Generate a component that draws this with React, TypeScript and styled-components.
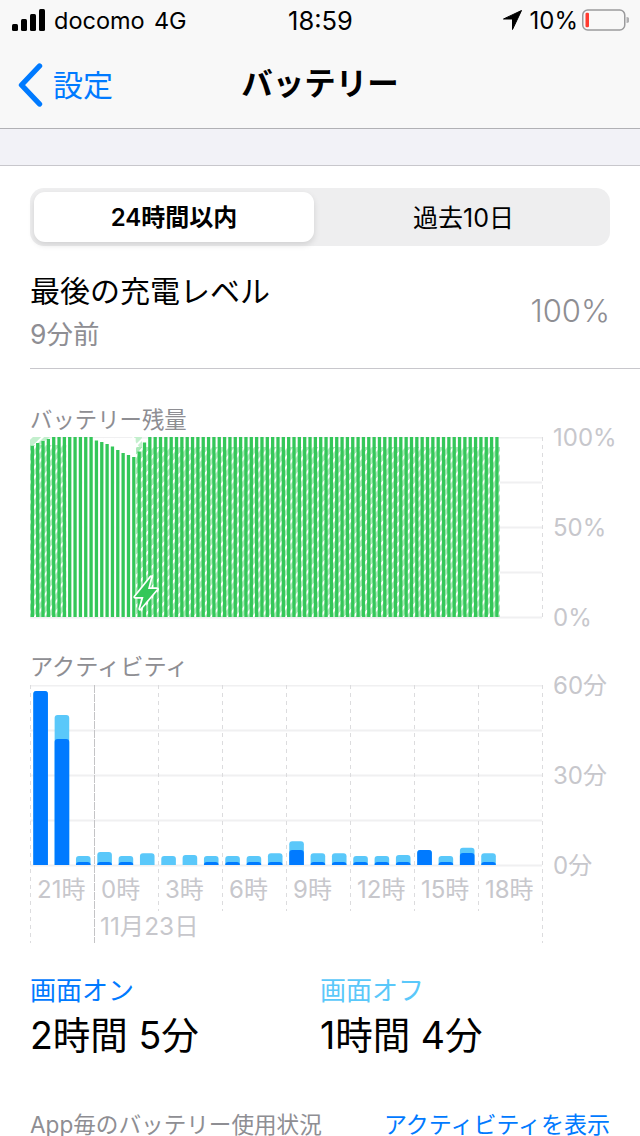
import React from "react";
import styled, { createGlobalStyle } from "styled-components";

const GlobalStyle = createGlobalStyle`
  html, body { margin: 0; padding: 0; width: 640px; height: 1136px; overflow: hidden; background: #fff; }
  body { font-family: Inter, "Noto Sans CJK JP", sans-serif; -webkit-font-smoothing: antialiased; }
`;

const Page = styled.div`
  width: 640px;
  height: 1136px;
  overflow: hidden;
  display: flex;
  flex-direction: column;
`;

const Header = styled.header`
  height: 128px;
  background: #f8f8f8;
  border-bottom: 1px solid #b1b1b5;
  display: flex;
  flex-direction: column;
  flex: none;
`;

const StatusBar = styled.div`
  height: 40px;
  padding: 0 11px 0 12px;
  display: grid;
  grid-template-columns: 1fr auto 1fr;
  align-items: center;
  font-size: 24px;
  color: #000;
`;

const StatusLeft = styled.div`
  display: flex;
  align-items: center;
  gap: 9px;
`;

const Carrier = styled.span`
  font-size: 23.5px;
  word-spacing: -2px;
`;

const Clock = styled.span`
  font-size: 25.5px;
`;

const StatusRight = styled.div`
  display: flex;
  align-items: center;
  justify-content: flex-end;
  gap: 4px;
`;

const ArrowIcon = styled.svg`
  margin-right: 4px;
`;

const NavBar = styled.div`
  flex: 1;
  position: relative;
  display: flex;
  align-items: center;
  justify-content: center;
`;

const BackButton = styled.div`
  position: absolute;
  left: 18px;
  top: 23px;
  display: flex;
  align-items: center;
  gap: 10px;
  color: #007aff;
  font-size: 30px;
  line-height: 44px;
`;

const Title = styled.h1`
  margin: 0;
  font-size: 31.5px;
  font-weight: 700;
  color: #000;
  line-height: 44px;
`;

const Band = styled.div`
  height: 36px;
  flex: none;
  background: #f2f2f7;
  border-bottom: 1px solid #c8c7cc;
`;

const Content = styled.main`
  flex: 1;
  padding: 22px 0 0 30px;
  display: flex;
  flex-direction: column;
`;

const Segmented = styled.div`
  width: 580px;
  height: 58px;
  box-sizing: border-box;
  padding: 4px;
  border-radius: 14px;
  background: #eeeeef;
  display: grid;
  grid-template-columns: 280px 1fr;
`;

const Segment = styled.div<{ $active?: boolean }>`
  display: flex;
  align-items: center;
  justify-content: center;
  padding: 0 0 3px ${(p) => (p.$active ? 0 : 7)}px;
  box-sizing: border-box;
  font-size: ${(p) => (p.$active ? 24 : 25)}px;
  color: #000;
  font-weight: ${(p) => (p.$active ? 600 : 400)};
  border-radius: 11px;
  background: ${(p) => (p.$active ? "#fff" : "transparent")};
  box-shadow: ${(p) => (p.$active ? "0 3px 6px rgba(0,0,0,0.12)" : "none")};
`;

const LevelRow = styled.div`
  margin-top: 22px;
  height: 101px;
  box-sizing: border-box;
  padding-right: 30px;
  border-bottom: 1px solid #c8c7cc;
  display: flex;
  justify-content: space-between;
  align-items: flex-start;
`;

const LevelText = styled.div`
  display: flex;
  flex-direction: column;
`;

const LevelTitle = styled.div`
  font-size: 30px;
  line-height: 46px;
  color: #000;
`;

const LevelSub = styled.div`
  font-size: 26.5px;
  line-height: 40px;
  color: #8e8e93;
`;

const LevelValue = styled.div`
  font-size: 31px;
  font-weight: 300;
  line-height: 44px;
  margin-top: 21px;
  color: #8e8e93;
`;

const SectionLabel = styled.div<{ $top: number; $h: number; $size: number }>`
  font-size: ${(p) => p.$size}px;
  line-height: 30px;
  height: ${(p) => p.$h}px;
  margin-top: ${(p) => p.$top}px;
  color: #8e8e93;
`;

const ChartRow = styled.div`
  position: relative;
  display: flex;
  align-items: flex-start;
`;

const YAxis = styled.div<{ $h: number }>`
  height: ${(p) => p.$h}px;
  margin: 1px 0 0 -1px;
  display: flex;
  flex-direction: column;
  justify-content: space-between;
  font-size: 24px;
  line-height: 0;
  color: #c7c7cc;
`;

const Tick = styled.span`
  display: block;
  height: 0;
`;

const XAxis = styled.div`
  position: absolute;
  left: 0;
  top: 190px;
  width: 512px;
  display: grid;
  grid-template-columns: repeat(8, 64px);
  font-size: 24px;
  line-height: 30px;
  color: #c7c7cc;
`;

const XLabel = styled.span`
  padding-left: 7px;
  white-space: nowrap;
`;

const DateLabel = styled.div`
  grid-column: 2 / span 3;
  padding-left: 6px;
  margin-top: 6px;
  font-size: 24.4px;
  line-height: 30px;
`;

const Totals = styled.div`
  margin-top: 30px;
  display: grid;
  grid-template-columns: 290px 1fr;
`;

const Total = styled.div`
  display: flex;
  flex-direction: column;
`;

const TotalLabel = styled.div<{ $color: string }>`
  font-size: 26px;
  line-height: 36px;
  color: ${(p) => p.$color};
`;

const TotalValue = styled.div`
  font-size: 37.5px;
  line-height: 54px;
  color: #000;
`;

const Footer = styled.div`
  margin-top: 45px;
  padding-right: 30px;
  display: flex;
  justify-content: space-between;
  font-size: 23px;
  line-height: 34px;
  color: #8e8e93;
`;

const FooterNote = styled.span`
  font-size: 22.6px;
`;

const FooterLink = styled.span`
  color: #007aff;
`;

const GREEN = "#34c759";
const GRID = "#f0f0f1";
const DASH = "#dcdcde";

// top offset in the plot of the first 22 of the 88 quarter-hour battery bars
const batteryTops = [9, 6, 4, 2, 0, 0, 0, 0, 0, 0, 0, 0, 3.5, 5, 7, 9.5, 13, 16, 18, 20, 14.5, 5.5];
const plainBars = (i: number) => i >= 7 && i <= 19;

const BatteryChart = () => {
  const bars = Array.from({ length: 88 }, (_, i) => i);
  return (
    <svg width="514" height="182" viewBox="0 0 514 182" style={{ flex: "none", display: "block", marginRight: 10 }}>
      <defs>
        <pattern id="gapHatch" width="5.34" height="10" patternUnits="userSpaceOnUse" patternTransform="skewY(-50)">
          <rect width="5.34" height="10" fill="#a8e9b7" />
          <rect y="4" width="5.34" height="3.4" fill="#fff" />
        </pattern>
        <pattern id="topHatch" width="8" height="8" patternUnits="userSpaceOnUse" patternTransform="rotate(45)">
          <rect width="8" height="8" fill="#c3efcd" />
          <rect width="2" height="8" fill="#fff" />
        </pattern>
      </defs>
      {[0, 45, 90, 135, 180].map((y) => (
        <line key={y} x1="0" x2="512" y1={y + 0.5} y2={y + 0.5} stroke={GRID} strokeWidth="1.8" />
      ))}
      <line x1="512.5" x2="512.5" y1="0" y2="180" stroke={DASH} strokeDasharray="4 4" />
      <line x1="0.5" x2="0.5" y1="0" y2="180" stroke={DASH} strokeDasharray="4 4" />
      <path d="M0 0H20L0 16Z" fill="url(#topHatch)" />
      <path d="M102 0H112V14Z" fill="url(#topHatch)" />
      <rect x="0" y="8" width="38" height="172" fill="url(#gapHatch)" />
      <rect x="106" y="10" width="364" height="170" fill="url(#gapHatch)" />
      {bars.map((i) =>
        plainBars(i) ? <rect key={`w${i}`} x={i * 5.333 - 1} y="1" width="5.333" height="179" fill="#fff" /> : null
      )}
      {bars.map((i) => (
        <rect key={i} x={0.7 + i * 5.34} y={batteryTops[i] ?? 0} width="3.3" height={180 - (batteryTops[i] ?? 0)} fill={GREEN} />
      ))}
      <path
        d="M121 140 L105 160 H113.5 L110 172 L127 152 H118 Z"
        fill={GREEN}
        stroke="#fff"
        strokeWidth="3.4"
        strokeLinejoin="round"
        style={{ paintOrder: "stroke" }}
      />
    </svg>
  );
};

const activity: [number, number][] = [
  [174, 174],
  [150, 126],
  [9, 3],
  [13, 3],
  [9, 3],
  [11.7, 0],
  [9, 0],
  [10, 0],
  [9, 3],
  [9, 3],
  [9, 3],
  [11.7, 3],
  [23.7, 15],
  [11.7, 3],
  [11.7, 3],
  [9, 3],
  [9, 3],
  [10, 3],
  [15, 15],
  [9, 3],
  [17.3, 12],
  [11.7, 3],
];

const Bar = ({ x, h, fill }: { x: number; h: number; fill: string }) => (
  <path d={`M${x} 180V${180 - h + 3}a3 3 0 0 1 3 -3h8.6a3 3 0 0 1 3 3V180Z`} fill={fill} />
);

const ActivityChart = () => {
  const xs = [128, 192, 256, 320, 384, 448];
  return (
    <svg width="514" height="258" viewBox="0 0 514 258" style={{ flex: "none", display: "block", marginRight: 10 }}>
      {[0, 45, 90, 135, 180].map((y) => (
        <line key={y} x1="0" x2="512" y1={y + 0.5} y2={y + 0.5} stroke={GRID} strokeWidth="1.8" />
      ))}
      <line x1="0.5" x2="0.5" y1="0" y2="258" stroke={DASH} strokeDasharray="4 4" />
      <line x1="512.5" x2="512.5" y1="0" y2="258" stroke={DASH} strokeDasharray="4 4" />
      {xs.map((x) => (
        <line key={x} x1={x + 0.5} x2={x + 0.5} y1="0" y2="226" stroke={DASH} strokeDasharray="4 4" />
      ))}
      <line x1="64.5" x2="64.5" y1="0" y2="258" stroke="#c4c4c6" strokeDasharray="8 1" />
      {activity.map(([light, dark], i) => {
        const x = 3.3 + i * 21.33;
        return (
          <g key={i}>
            <Bar x={x} h={light} fill="#5ac8fa" />
            {dark > 0 && <Bar x={x} h={dark} fill="#007aff" />}
          </g>
        );
      })}
    </svg>
  );
};

const Signal = () => (
  <svg width="33" height="22" viewBox="0 0 33 22">
    <rect x="0" y="15" width="6" height="7" rx="1.5" fill="#000" />
    <rect x="9" y="10" width="6" height="12" rx="1.5" fill="#000" />
    <rect x="18" y="5" width="6" height="17" rx="1.5" fill="#000" />
    <rect x="27" y="0" width="6" height="22" rx="1.5" fill="#000" />
  </svg>
);

const LocationArrow = () => (
  <ArrowIcon width="19" height="20" viewBox="0 0 19 20">
    <path d="M18.5 0.5 L0.5 9 H9.5 V19.5 Z" fill="#000" stroke="#000" strokeLinejoin="round" />
  </ArrowIcon>
);

const Battery = () => (
  <svg width="47" height="22" viewBox="0 0 47 22">
    <rect x="0.75" y="1" width="42" height="20" rx="5" fill="none" stroke="#9a9a9c" strokeWidth="1.5" />
    <rect x="3.5" y="3.7" width="3.5" height="14.6" rx="1.2" fill="#ff3b30" />
    <path d="M44.5 8a3 3 0 0 1 0 6Z" fill="#b0b0b2" />
  </svg>
);

const Chevron = () => (
  <svg width="25" height="44" viewBox="0 0 25 44">
    <path d="M21.5 3 L3.5 22 L21.5 41" fill="none" stroke="#007aff" strokeWidth="5.4" strokeLinecap="round" strokeLinejoin="round" />
  </svg>
);

export default function App() {
  return (
    <Page>
      <GlobalStyle />
      <Header>
        <StatusBar>
          <StatusLeft>
            <Signal />
            <Carrier>docomo&nbsp;&nbsp;4G</Carrier>
          </StatusLeft>
          <Clock>18:59</Clock>
          <StatusRight>
            <LocationArrow />
            <span>10%</span>
            <Battery />
          </StatusRight>
        </StatusBar>
        <NavBar>
          <BackButton>
            <Chevron />
            <span>設定</span>
          </BackButton>
          <Title>バッテリー</Title>
        </NavBar>
      </Header>
      <Band />
      <Content>
        <Segmented>
          <Segment $active>24時間以内</Segment>
          <Segment>過去10日</Segment>
        </Segmented>
        <LevelRow>
          <LevelText>
            <LevelTitle>最後の充電レベル</LevelTitle>
            <LevelSub>9分前</LevelSub>
          </LevelText>
          <LevelValue>100%</LevelValue>
        </LevelRow>
        <SectionLabel $top={36} $h={32} $size={22.4}>バッテリー残量</SectionLabel>
        <ChartRow>
          <BatteryChart />
          <YAxis $h={180}>
            <Tick>100%</Tick>
            <Tick>50%</Tick>
            <Tick>0%</Tick>
          </YAxis>
        </ChartRow>
        <SectionLabel $top={33} $h={33} $size={23.2}>アクティビティ</SectionLabel>
        <ChartRow>
          <ActivityChart />
          <YAxis $h={180}>
            <Tick>60分</Tick>
            <Tick>30分</Tick>
            <Tick>0分</Tick>
          </YAxis>
          <XAxis>
            <XLabel>21時</XLabel>
            <XLabel>0時</XLabel>
            <XLabel>3時</XLabel>
            <XLabel>6時</XLabel>
            <XLabel>9時</XLabel>
            <XLabel>12時</XLabel>
            <XLabel>15時</XLabel>
            <XLabel>18時</XLabel>
            <DateLabel>11月23日</DateLabel>
          </XAxis>
        </ChartRow>
        <Totals>
          <Total>
            <TotalLabel $color="#007aff">画面オン</TotalLabel>
            <TotalValue>2時間 5分</TotalValue>
          </Total>
          <Total>
            <TotalLabel $color="#5ac8fa">画面オフ</TotalLabel>
            <TotalValue>1時間 4分</TotalValue>
          </Total>
        </Totals>
        <Footer>
          <FooterNote>App毎のバッテリー使用状況</FooterNote>
          <FooterLink>アクティビティを表示</FooterLink>
        </Footer>
      </Content>
    </Page>
  );
}
